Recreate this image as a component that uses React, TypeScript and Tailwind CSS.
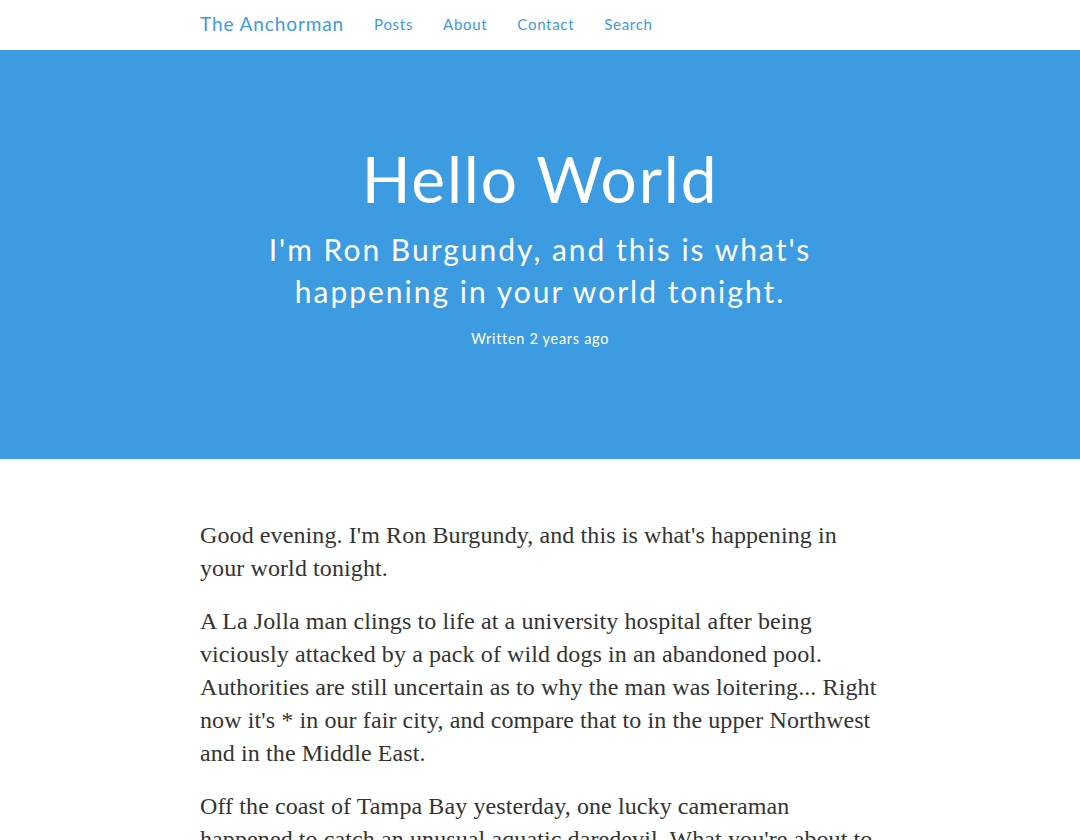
import React from "react";

const sans = "font-['Lato','Noto_Sans',sans-serif]";

export default function App() {
  return (
    <div className="min-h-[840px] bg-white overflow-hidden">
      <nav className="h-[50px] bg-white flex items-center">
        <div className={`ml-[200px] flex items-center ${sans}`}>
          <a className="text-[19px] text-[#3c9be1] tracking-[0.9px] mr-[30px] -mt-[1px]">The Anchorman</a>
          <div className="flex gap-[30px] text-[15px] text-[#3c9be1] tracking-[0.7px] -mt-[1px]">
            <a>Posts</a>
            <a>About</a>
            <a>Contact</a>
            <a>Search</a>
          </div>
        </div>
      </nav>
      <header className={`h-[409px] bg-[#3c9be1] text-white flex flex-col items-center ${sans}`}>
        <h1 className="mt-[90px] text-[64px] leading-[78px] tracking-[1.8px]">Hello World</h1>
        <h2 className="mt-[10px] w-[680px] text-center text-[30px] leading-[42px] tracking-[2px]">
          I'm Ron Burgundy, and this is what's happening in your world tonight.
        </h2>
        <p className="mt-[16px] text-[14.5px] tracking-[0.7px]">Written 2 years ago</p>
      </header>
      <main className="w-[680px] ml-[200px] pt-[60px] font-['Liberation_Serif',serif] text-[24px] leading-[33px] tracking-[0.1px] text-[#333]">
        <p className="mb-[20px]">
          Good evening. I'm Ron Burgundy, and this is what's happening in your world tonight.
        </p>
        <p className="mb-[20px]">
          A La Jolla man clings to life at a university hospital after being viciously attacked by a pack of wild dogs in an abandoned pool. Authorities are still uncertain as to why the man was loitering... Right now it's * in our fair city, and compare that to in the upper Northwest and in the Middle East.
        </p>
        <p className="mb-[20px]">
          Off the coast of Tampa Bay yesterday, one lucky cameraman happened to catch an unusual aquatic daredevil. What you're about to see is truly remarkable.
        </p>
      </main>
    </div>
  );
}
